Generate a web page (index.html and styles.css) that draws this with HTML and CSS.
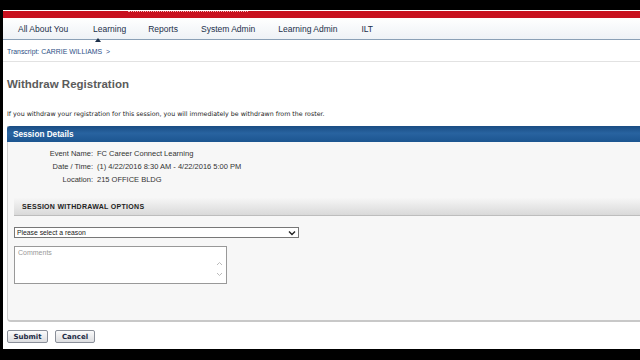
FILE: index.html
```html
<!DOCTYPE html>
<html lang="en">
<head>
  <meta charset="UTF-8" />
  <title>Withdraw Registration</title>
  <link rel="stylesheet" href="styles.css">
</head>
<body>
  <div class="screen">
    <div class="topbar"><span class="dots"></span></div>
    <nav class="nav">
      <a>All About You</a>
      <a class="active">Learning</a>
      <a>Reports</a>
      <a>System Admin</a>
      <a>Learning Admin</a>
      <a>ILT</a>
    </nav>
    <div class="crumb">Transcript: CARRIE WILLIAMS &nbsp;&gt;</div>

    <main class="content">
      <h1>Withdraw Registration</h1>
      <p class="intro">If you withdraw your registration for this session, you will immediately be withdrawn from the roster.</p>

      <section class="panel">
        <div class="panel-head">Session Details</div>
        <div class="panel-body">
          <dl class="details">
            <dt>Event Name:</dt><dd>FC Career Connect Learning</dd>
            <dt>Date / Time:</dt><dd>(1) 4/22/2016 8:30 AM - 4/22/2016 5:00 PM</dd>
            <dt>Location:</dt><dd>215 OFFICE BLDG</dd>
          </dl>

          <div class="sub-head">SESSION WITHDRAWAL OPTIONS</div>

          <div class="select">
            <span>Please select a reason</span>
            <svg width="8" height="6" viewBox="0 0 8 6"><path d="M1 1.5 L4 4.5 L7 1.5" fill="none" stroke="#222" stroke-width="1.4"/></svg>
          </div>

          <div class="comments">
            <span>Comments</span>
            <div class="scroll">
              <svg width="7" height="5" viewBox="0 0 7 5"><path d="M1 4 L3.5 1.5 L6 4" fill="none" stroke="#bbb" stroke-width="1"/></svg>
              <svg width="7" height="5" viewBox="0 0 7 5"><path d="M1 1 L3.5 3.5 L6 1" fill="none" stroke="#bbb" stroke-width="1"/></svg>
            </div>
          </div>
        </div>
      </section>

      <div class="actions">
        <button>Submit</button>
        <button>Cancel</button>
      </div>
    </main>
  </div>
</body>
</html>
```

FILE: styles.css
```css
* {
  box-sizing: border-box;
}

body {
  margin: 0;
  background: #000;
  font-family: "Liberation Sans", Arial, sans-serif;
  color: #333;
}

.screen {
  margin: 10px 0 0 3px;
  height: 339px;
  background: #fff;
  overflow: hidden;
}

.topbar {
  height: 7px;
  background: #c8101e;
  padding-left: 125px;
}

.dots {
  display: block;
  width: 120px;
  border-top: 1px dotted #f3b9b9;
  margin-top: 1px;
}

.nav {
  height: 22px;
  display: flex;
  align-items: center;
  padding-left: 15px;
  background: linear-gradient(#ffffff, #eef2f6);
  border-bottom: 1px solid #8aa0b6;
}

.nav a {
  font-size: 8.5px;
  color: #1b2f4a;
  position: relative;
}

.nav a:nth-child(1) { margin-right: 25px; }
.nav a:nth-child(2) { margin-right: 22px; }
.nav a:nth-child(3) { margin-right: 23px; }
.nav a:nth-child(4) { margin-right: 23px; }
.nav a:nth-child(5) { margin-right: 24px; }

.nav a.active::after {
  content: "";
  position: absolute;
  left: 50%;
  bottom: -8px;
  margin-left: -15px;
  border-left: 3px solid transparent;
  border-right: 3px solid transparent;
  border-bottom: 4px solid #1c2f48;
}

.crumb {
  font-size: 6.9px;
  color: #2c4f86;
  padding: 8px 0 0 4px;
  height: 22px;
  border-bottom: 1px solid #e2e2e2;
}

.content {
  padding: 0 0 0 4px;
}

h1 {
  margin: 16px 0 0;
  font-size: 11.5px;
  color: #5b5b5b;
  font-weight: bold;
  height: 14px;
}

.intro {
  margin: 18px 0 0;
  font-family: "DejaVu Sans", Verdana, sans-serif;
  font-size: 6.3px;
  color: #222;
  height: 10px;
  white-space: nowrap;
}

.panel {
  margin-top: 6px;
  background: #f7f7f7;
  border-left: 1px solid #cfcfcf;
  border-bottom: 2px solid #c8c8c8;
  border-bottom-left-radius: 4px;
  height: 196px;
}

.panel-head {
  height: 16px;
  background: linear-gradient(#1a4d83, #2863a0 45%, #1c5590);
  color: #fff;
  font-size: 8.2px;
  font-weight: bold;
  padding: 4px 0 0 6px;
  margin-left: -1px;
  border-top-left-radius: 3px;
}

.panel-body {
  padding: 8px 0 0 6px;
}

.details {
  display: grid;
  grid-template-columns: 79px auto;
  column-gap: 4px;
  row-gap: 5px;
  margin: 0;
  font-size: 7.5px;
  color: #333;
  line-height: 8px;
}

.details dt {
  text-align: right;
}

.details dd {
  margin: 0;
}

.sub-head {
  margin-top: 14px;
  height: 18px;
  background: linear-gradient(#f6f6f6, #d9d9d9);
  border-bottom: 1px solid #bdbdbd;
  font-size: 7px;
  font-weight: bold;
  color: #222;
  padding: 5px 0 0 8px;
  letter-spacing: 0.3px;
}

.select {
  margin-top: 11px;
  width: 285px;
  height: 11px;
  border: 1px solid #777;
  background: #fff;
  display: flex;
  align-items: center;
  justify-content: space-between;
  padding: 0 2px;
  font-size: 6.8px;
  color: #222;
}

.comments {
  margin-top: 8px;
  width: 213px;
  height: 38px;
  border: 1px solid #999;
  background: #fff;
  display: flex;
  justify-content: space-between;
  padding: 2px 3px;
  font-size: 7px;
  color: #999;
}

.scroll {
  display: flex;
  flex-direction: column;
  justify-content: flex-end;
  gap: 6px;
  padding-bottom: 4px;
}

.actions {
  display: flex;
  gap: 7px;
  margin-top: 8px;
}

button {
  font-family: "DejaVu Sans", Verdana, sans-serif;
  font-size: 7px;
  font-weight: bold;
  color: #1d2a44;
  height: 13px;
  padding: 0;
  border: 1px solid #8a8f99;
  border-radius: 2px;
  background: linear-gradient(#fbfbfb, #dcdde0);
}

button:first-child {
  width: 41px;
}

button:last-child {
  width: 40px;
}
```
